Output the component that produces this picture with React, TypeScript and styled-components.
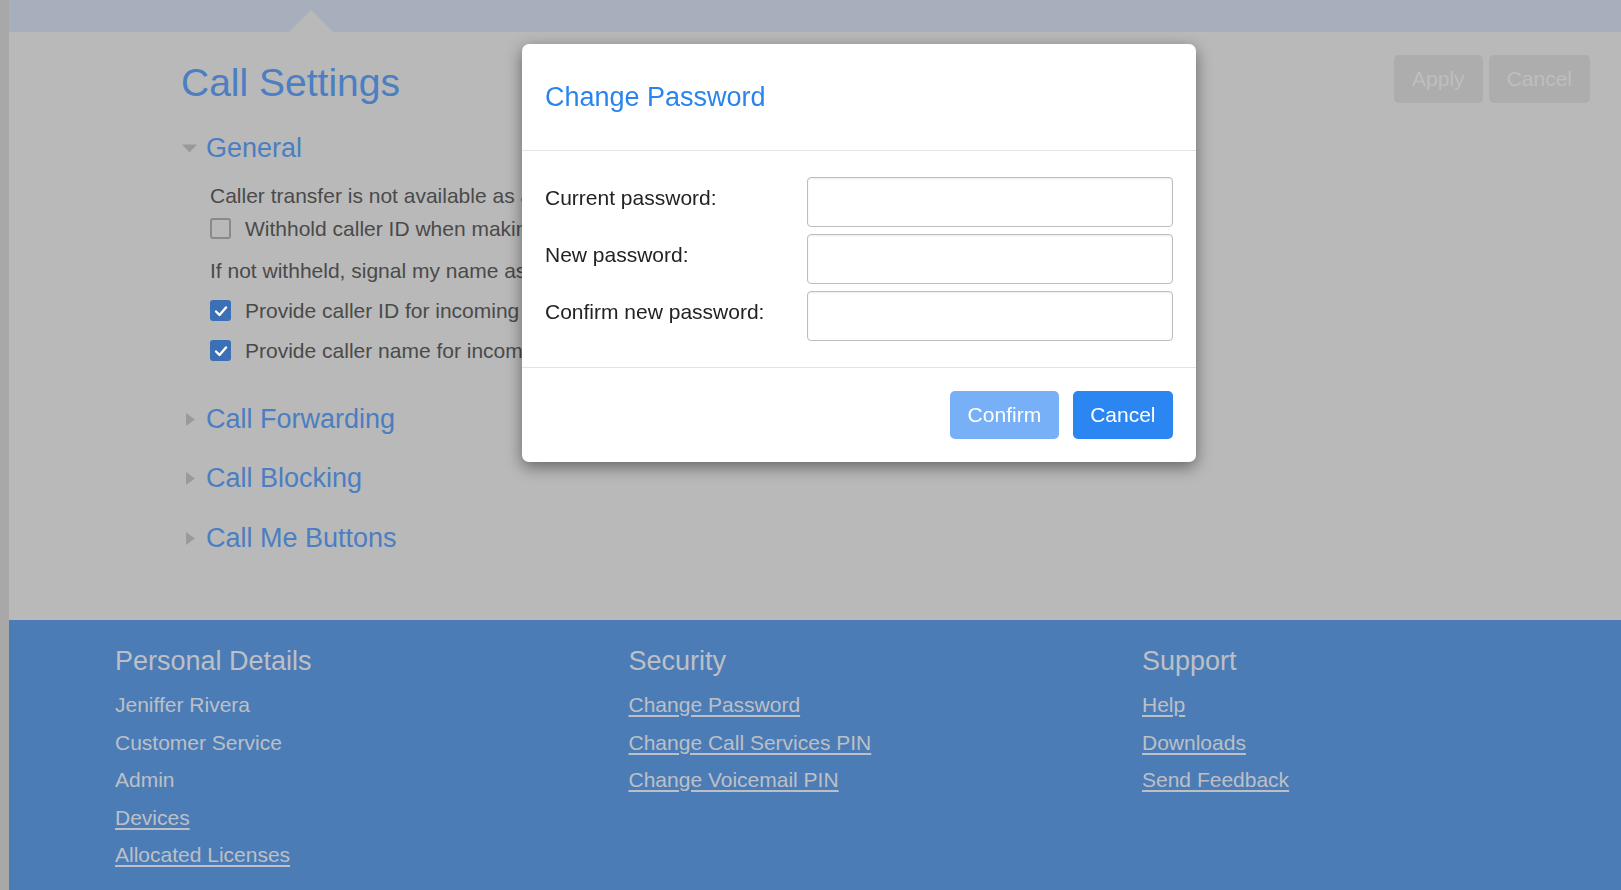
import React from 'react'
import styled, { createGlobalStyle } from 'styled-components'

const GlobalStyle = createGlobalStyle`
  html, body {
    margin: 0;
    padding: 0;
    background: #b9b9b9;
    font-family: "Liberation Sans", Arial, sans-serif;
  }
  * { box-sizing: border-box; }
`

const Page = styled.div`
  display: flex;
  min-height: 100vh;
`

const SideStrip = styled.div`
  width: 9px;
  flex-shrink: 0;
  background: #a8a8a8;
`

const Main = styled.div`
  flex: 1;
  display: flex;
  flex-direction: column;
  min-width: 0;
`

const TopBar = styled.div`
  height: 32px;
  background: #a7aebc;
  position: relative;
`

const Notch = styled.div`
  position: absolute;
  left: 280px;
  bottom: 0;
  width: 0;
  height: 0;
  border-left: 22.5px solid transparent;
  border-right: 22.5px solid transparent;
  border-bottom: 22px solid #b9b9b9;
`

const Content = styled.div`
  background: #b9b9b9;
  padding: 23px 31px 66px 172px;
`

const HeaderRow = styled.div`
  display: flex;
  justify-content: space-between;
  align-items: flex-start;
`

const Title = styled.h1`
  margin: 5.5px 0 0;
  font-size: 39px;
  line-height: 44px;
  font-weight: normal;
  color: #4b7ec2;
`

const ButtonGroup = styled.div`
  display: flex;
  gap: 6px;
`

const GhostButton = styled.button`
  height: 48px;
  padding: 0 18px;
  border: none;
  border-radius: 5px;
  background: #adadad;
  color: #bebebe;
  font-family: inherit;
  font-size: 21px;
`

const Sections = styled.div`
  margin-top: 28px;
  display: flex;
  flex-direction: column;
  gap: 27.5px;
`

const SectionHeader = styled.div`
  display: flex;
  align-items: center;
  gap: 9px;
  height: 32px;
  padding-left: 1px;
  font-size: 27px;
  color: #4b7ec2;
  white-space: nowrap;
`

const Toggle = styled.svg`
  width: 15px;
  height: 15px;
  flex-shrink: 0;
  fill: #9a9a9a;
`

const SectionBody = styled.div`
  margin: 19px 0 13px;
  padding-left: 29px;
  display: flex;
  flex-direction: column;
  gap: 16px;
`

const Group = styled.div`
  display: flex;
  flex-direction: column;
  gap: 9px;
  margin-bottom: 2px;
`

const Note = styled.div`
  font-size: 21px;
  line-height: 24px;
  color: #4a4a4a;
  white-space: nowrap;
`

const CheckRow = styled.label`
  display: flex;
  align-items: center;
  gap: 14px;
  height: 24px;
  font-size: 21px;
  color: #4a4a4a;
  white-space: nowrap;
`

const Box = styled.span<{ $checked?: boolean }>`
  width: 21px;
  height: 21px;
  flex-shrink: 0;
  border-radius: 3px;
  display: flex;
  align-items: center;
  justify-content: center;
  background: ${p => (p.$checked ? '#3b6fb6' : 'transparent')};
  border: ${p => (p.$checked ? 'none' : '2px solid #8a8a8a')};
`

const Footer = styled.footer`
  flex: 1;
  background: #4c7cb6;
  padding: 24.5px 0 22px 106px;
  display: grid;
  grid-template-columns: 513.5px 513.5px 1fr;
`

const FooterColumn = styled.div`
  display: flex;
  flex-direction: column;
  gap: 13.5px;
`

const FooterHeading = styled.h3`
  margin: 0 0 3px;
  font-size: 27px;
  line-height: 32px;
  font-weight: normal;
  color: #bcc0c6;
  white-space: nowrap;
`

const FooterItem = styled.a<{ $link?: boolean }>`
  font-size: 21px;
  line-height: 24px;
  color: #bcc0c6;
  text-decoration: ${p => (p.$link ? 'underline' : 'none')};
  text-underline-offset: 3px;
  white-space: nowrap;
  align-self: flex-start;
`

const Dialog = styled.div`
  position: fixed;
  top: 44px;
  left: 522px;
  width: 674px;
  background: #fff;
  border-radius: 7px;
  box-shadow: 0 5px 16px rgba(0, 0, 0, 0.45);
`

const DialogHeader = styled.div`
  padding: 38px 23px 37.5px;
  border-bottom: 1px solid #e3e3e3;
`

const DialogTitle = styled.h2`
  margin: 0;
  font-size: 27px;
  line-height: 30px;
  font-weight: normal;
  color: #2a84ee;
`

const DialogBody = styled.div`
  padding: 26px 23px;
  display: flex;
  flex-direction: column;
  gap: 7px;
`

const FieldRow = styled.div`
  display: grid;
  grid-template-columns: 262px 1fr;
  align-items: start;
`

const FieldLabel = styled.label`
  padding-top: 9px;
  font-size: 21px;
  line-height: 24px;
  color: #222;
`

const TextInput = styled.input`
  height: 50px;
  width: 100%;
  border: 1px solid #bdbdbd;
  border-radius: 4px;
  box-shadow: inset 0 1px 2px rgba(0, 0, 0, 0.08);
  font-size: 21px;
  padding: 0 12px;
  outline: none;
`

const DialogFooter = styled.div`
  border-top: 1px solid #e3e3e3;
  padding: 23px 23px 23px;
  display: flex;
  justify-content: flex-end;
  gap: 14px;
`

const DialogButton = styled.button<{ $muted?: boolean }>`
  height: 48px;
  padding: 0 17.5px;
  border: none;
  border-radius: 5px;
  background: ${p => (p.$muted ? '#77b0f7' : '#2b86f2')};
  color: #fff;
  font-family: inherit;
  font-size: 21px;
`

function SectionToggle({ open }: { open?: boolean }) {
  return (
    <Toggle viewBox="0 0 15 15">
      {open ? <polygon points="0,3.5 15,3.5 7.5,11.5" /> : <polygon points="4,1 13,7.5 4,14" />}
    </Toggle>
  )
}

function Checkbox({ checked }: { checked?: boolean }) {
  return (
    <Box $checked={checked}>
      {checked && (
        <svg width="14" height="14" viewBox="0 0 14 14">
          <path d="M2 7.5 L5.5 11 L12 3.5" fill="none" stroke="#fff" strokeWidth="2.4" strokeLinecap="round" strokeLinejoin="round" />
        </svg>
      )}
    </Box>
  )
}

const collapsed = ['Call Forwarding', 'Call Blocking', 'Call Me Buttons']

const footerColumns = [
  {
    title: 'Personal Details',
    items: [
      { text: 'Jeniffer Rivera' },
      { text: 'Customer Service' },
      { text: 'Admin' },
      { text: 'Devices', link: true },
      { text: 'Allocated Licenses', link: true },
    ],
  },
  {
    title: 'Security',
    items: [
      { text: 'Change Password', link: true },
      { text: 'Change Call Services PIN', link: true },
      { text: 'Change Voicemail PIN', link: true },
    ],
  },
  {
    title: 'Support',
    items: [
      { text: 'Help', link: true },
      { text: 'Downloads', link: true },
      { text: 'Send Feedback', link: true },
    ],
  },
]

const passwordFields = ['Current password:', 'New password:', 'Confirm new password:']

export default function App() {
  return (
    <>
      <GlobalStyle />
      <Page>
        <SideStrip />
        <Main>
          <TopBar>
            <Notch />
          </TopBar>
          <Content>
            <HeaderRow>
              <Title>Call Settings</Title>
              <ButtonGroup>
                <GhostButton>Apply</GhostButton>
                <GhostButton>Cancel</GhostButton>
              </ButtonGroup>
            </HeaderRow>
            <Sections>
              <div>
                <SectionHeader>
                  <SectionToggle open />
                  General
                </SectionHeader>
                <SectionBody>
                  <Group>
                    <Note>Caller transfer is not available as a</Note>
                    <CheckRow>
                      <Checkbox />
                      Withhold caller ID when making calls
                    </CheckRow>
                  </Group>
                  <Note>If not withheld, signal my name as:</Note>
                  <CheckRow>
                    <Checkbox checked />
                    Provide caller ID for incoming
                  </CheckRow>
                  <CheckRow>
                    <Checkbox checked />
                    Provide caller name for incoming calls
                  </CheckRow>
                </SectionBody>
              </div>
              {collapsed.map(name => (
                <SectionHeader key={name}>
                  <SectionToggle />
                  {name}
                </SectionHeader>
              ))}
            </Sections>
          </Content>
          <Footer>
            {footerColumns.map(col => (
              <FooterColumn key={col.title}>
                <FooterHeading>{col.title}</FooterHeading>
                {col.items.map(item => (
                  <FooterItem key={item.text} $link={item.link} href={item.link ? '#' : undefined}>
                    {item.text}
                  </FooterItem>
                ))}
              </FooterColumn>
            ))}
          </Footer>
        </Main>
      </Page>
      <Dialog>
        <DialogHeader>
          <DialogTitle>Change Password</DialogTitle>
        </DialogHeader>
        <DialogBody>
          {passwordFields.map(label => (
            <FieldRow key={label}>
              <FieldLabel>{label}</FieldLabel>
              <TextInput type="password" />
            </FieldRow>
          ))}
        </DialogBody>
        <DialogFooter>
          <DialogButton $muted>Confirm</DialogButton>
          <DialogButton>Cancel</DialogButton>
        </DialogFooter>
      </Dialog>
    </>
  )
}
